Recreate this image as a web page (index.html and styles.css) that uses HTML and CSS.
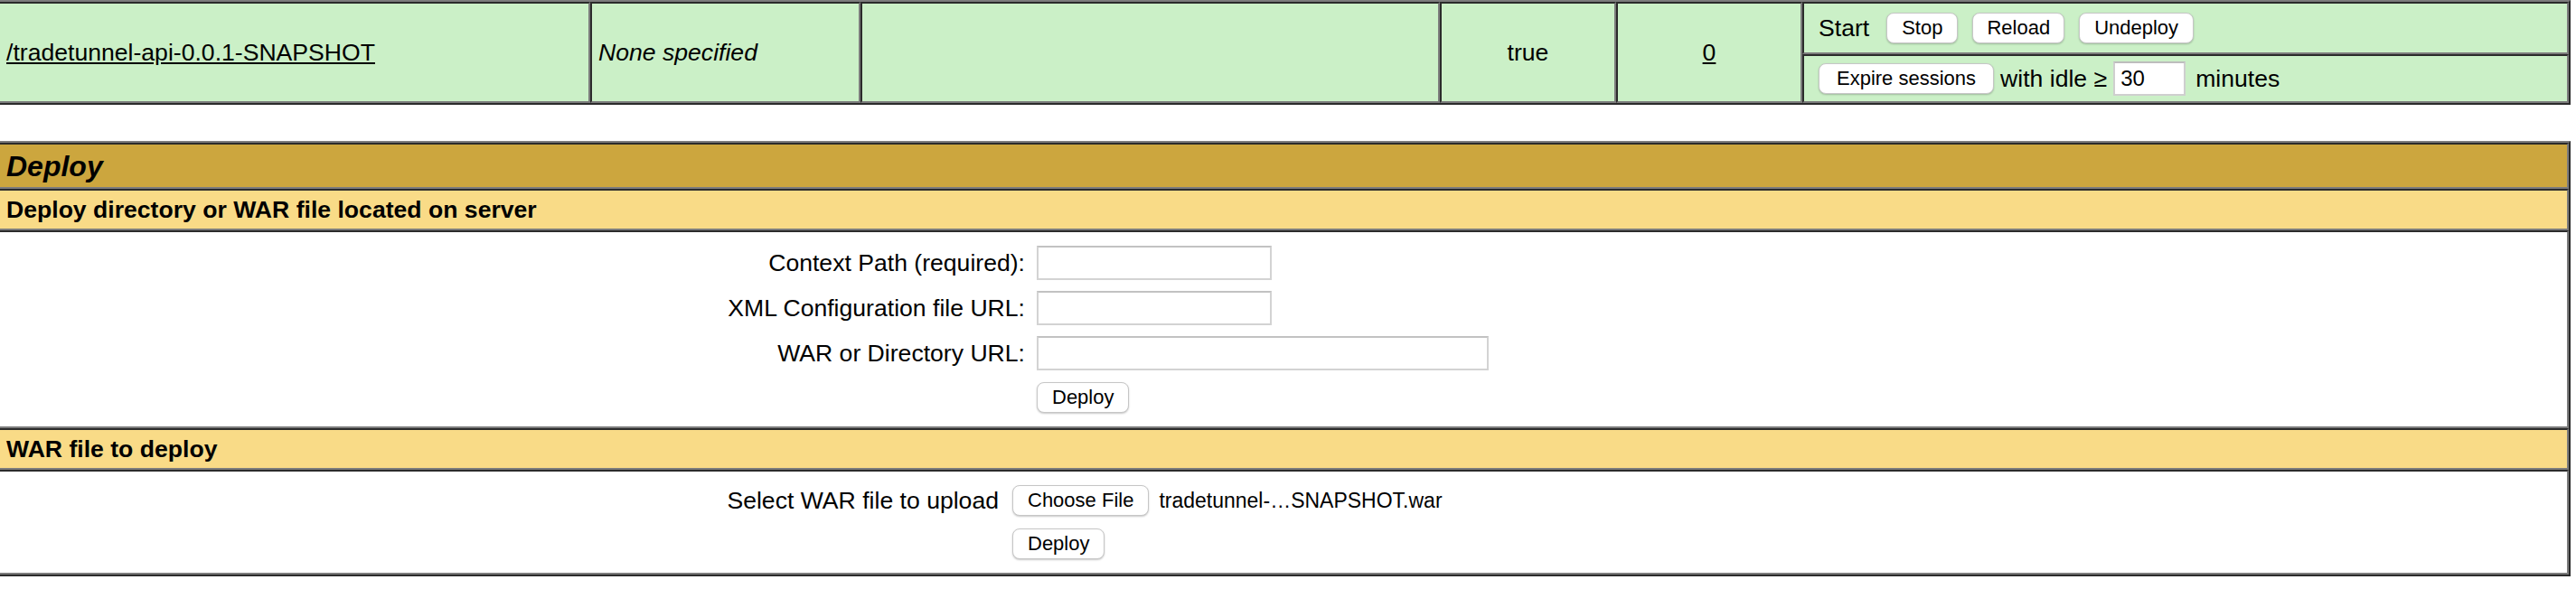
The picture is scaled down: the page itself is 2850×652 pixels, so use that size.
FILE: index.html
```html
<!DOCTYPE html>
<html lang="en">
<head>
<meta charset="utf-8">
<title>Tomcat Web Application Manager</title>
<link rel="stylesheet" href="styles.css">
</head>
<body>
<div class="apps">
  <div class="cell c-span"><a class="link" href="#">/tradetunnel-api-0.0.1-SNAPSHOT</a></div>
  <div class="cell c-span"><em>None specified</em></div>
  <div class="cell c-span"></div>
  <div class="cell c-span c-center">true</div>
  <div class="cell c-span c-center"><a class="link" href="#">0</a></div>
  <div class="cell c-cmd1">
    <span class="start">Start</span>
    <button class="btn" type="button">Stop</button>
    <button class="btn btn-reload" type="button">Reload</button>
    <button class="btn" type="button">Undeploy</button>
  </div>
  <div class="cell c-cmd2">
    <button class="btn btn-expire" type="button">Expire sessions</button>
    <span>with idle ≥</span>
    <input class="idle" type="text" value="30">
    <span class="minutes">minutes</span>
  </div>
</div>

<div class="deploy">
  <div class="cell title">Deploy</div>
  <div class="cell header">Deploy directory or WAR file located on server</div>
  <div class="body body-server">
    <form class="form form-server">
      <label class="lbl">Context Path (required):</label>
      <div class="fld"><input class="text text-short" type="text"></div>
      <label class="lbl">XML Configuration file URL:</label>
      <div class="fld"><input class="text text-short" type="text"></div>
      <label class="lbl">WAR or Directory URL:</label>
      <div class="fld"><input class="text text-long" type="text"></div>
      <span class="lbl"></span>
      <div class="fld"><button class="btn" type="button">Deploy</button></div>
    </form>
  </div>
  <div class="cell header">WAR file to deploy</div>
  <div class="body body-upload">
    <form class="form form-upload">
      <label class="lbl">Select WAR file to upload</label>
      <div class="fld file">
        <button class="btn" type="button">Choose File</button>
        <span class="fname">tradetunnel-…SNAPSHOT.war</span>
      </div>
      <span class="lbl"></span>
      <div class="fld"><button class="btn" type="button">Deploy</button></div>
    </form>
  </div>
</div>
</body>
</html>
```

FILE: styles.css
```css
:root {
  --green: #cbf0c7;
  --gold: #cca63e;
  --yellow: #f9db87;
  --dark: #2b2b2b;
  --gray: #7c7c7c;
}

*, *::before, *::after {
  box-sizing: border-box;
}

html, body {
  margin: 0;
  padding: 0;
  background: #fff;
}

body {
  font-family: "Liberation Sans", Arial, Helvetica, sans-serif;
  font-size: 26.6px;
  line-height: 30px;
  color: #000;
  overflow: hidden;
}

.link {
  color: #000;
  text-decoration: underline;
}

/* ---------- application row ---------- */
.apps {
  display: grid;
  grid-template-columns: 655px 299px 641px 195px 206px 1fr;
  grid-template-rows: 58px 54px;
  margin: 0 6px 0 -4px;
  border: 2px solid;
  border-color: var(--gray) var(--dark) var(--dark) var(--gray);
  background: var(--green);
}

.cell {
  display: flex;
  align-items: center;
  padding: 0 7px;
  border: 2px solid;
  border-color: var(--dark) var(--gray) var(--gray) var(--dark);
}

.c-span {
  grid-row: 1 / span 2;
}

.c-center {
  justify-content: center;
}

.c-cmd1 {
  grid-column: 6;
  grid-row: 1;
  padding-left: 16px;
  gap: 16px;
}

.start {
  margin-right: 3px;
}

.c-cmd2 {
  grid-column: 6;
  grid-row: 2;
  padding-left: 16px;
  gap: 7px;
}

.minutes {
  margin-left: 4px;
}

.btn {
  font-family: "Liberation Sans", Arial, Helvetica, sans-serif;
  font-size: 22px;
  line-height: 1;
  height: 34px;
  padding: 0 16px;
  color: #000;
  background: #fff;
  border: 1px solid #c6c6c6;
  border-radius: 8px;
  box-shadow: 0 1px 2px rgba(0, 0, 0, 0.22);
}

.btn-reload {
  padding: 0 15px;
}

.btn-expire {
  padding: 0 19px;
}

.idle {
  width: 80px;
  height: 38px;
  padding: 0 6px;
  font-family: "Liberation Sans", Arial, Helvetica, sans-serif;
  font-size: 24px;
  color: #000;
  background: #fff;
  border: 2px solid #cfcfcf;
  border-top-color: #bdbdbd;
  border-radius: 0;
}

/* ---------- deploy section ---------- */
.deploy {
  margin: 40px 6px 0 -4px;
  border: 2px solid;
  border-color: var(--gray) var(--dark) var(--dark) var(--gray);
}

.title {
  height: 51px;
  background: var(--gold);
  font-size: 32px;
  line-height: 36px;
  font-weight: bold;
  font-style: italic;
}

.header {
  height: 46px;
  background: var(--yellow);
  font-weight: bold;
}

.body {
  border: 2px solid;
  border-color: var(--dark) var(--gray) var(--gray) var(--dark);
  background: #fff;
}

.body-server {
  padding: 9px 0 8px;
}

.body-upload {
  padding: 8px 0;
}

.form {
  display: grid;
  align-items: center;
  margin: 0;
}

.form-server {
  grid-template-columns: 1140px 1fr;
  grid-template-rows: 50px 50px 50px 48px;
}

.form-upload {
  grid-template-columns: 1112px 1fr;
  grid-template-rows: 48px 48px;
}

.lbl {
  text-align: right;
  padding-right: 6px;
}

.form-upload .lbl {
  padding-right: 7px;
}

.fld {
  display: flex;
  align-items: center;
  padding-left: 7px;
}

.form-upload .fld {
  padding-left: 8px;
}

.text {
  height: 38px;
  padding: 0 6px;
  font-family: "Liberation Sans", Arial, Helvetica, sans-serif;
  font-size: 24px;
  background: #fff;
  border: 2px solid #d3d3d3;
  border-top-color: #c2c2c2;
  border-radius: 0;
}

.text-short {
  width: 260px;
}

.text-long {
  width: 500px;
}

.fname {
  margin-left: 11px;
  font-size: 23px;
}
```
